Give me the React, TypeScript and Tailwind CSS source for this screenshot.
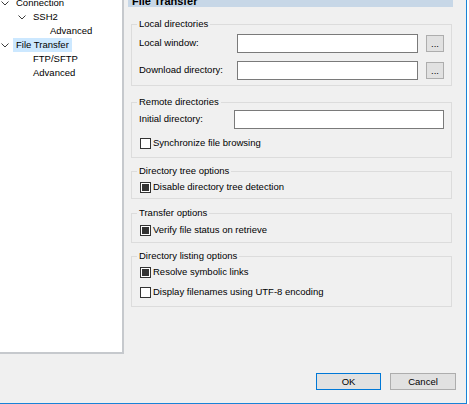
import React from 'react';

const font = { fontFamily: '"Liberation Sans", Arial, sans-serif' };

type TreeItem = { label: string; level: number; open?: boolean; selected?: boolean };

const tree: TreeItem[] = [
  { label: 'Connection', level: 0, open: true },
  { label: 'SSH2', level: 1, open: true },
  { label: 'Advanced', level: 2 },
  { label: 'File Transfer', level: 0, open: true, selected: true },
  { label: 'FTP/SFTP', level: 1 },
  { label: 'Advanced', level: 1 },
];

const Chevron = () => (
  <svg width="8" height="5" viewBox="0 0 8 5" className="ml-[1px]">
    <polyline points="0.5,0.5 4,4 7.5,0.5" fill="none" stroke="#3c3c3c" strokeWidth="1" />
  </svg>
);

const TreeRow: React.FC<{ item: TreeItem }> = ({ item }) => {
  const indent = ['pl-0', 'pl-[17px]', 'pl-[34px]'][item.level];
  return (
    <div className={`flex items-center h-[14px] ${indent}`}>
      <div className="w-[13px] flex items-center">{item.open && <Chevron />}</div>
      <span className={`px-[3px] h-[14px] leading-[14px] ${item.selected ? 'bg-[#cce8ff]' : ''}`}>
        {item.label}
      </span>
    </div>
  );
};

const Checkbox: React.FC<{ label: string; checked?: boolean; className?: string }> = ({ label, checked, className }) => (
  <div className={`flex items-center h-[12px] ${className ?? ''}`}>
    <div className="ml-[1px] w-[11px] h-[11px] border border-[#333333] bg-white flex items-center justify-center">
      {checked && <div className="w-[7px] h-[7px] bg-[#333333]" />}
    </div>
    <span className="ml-[2px] leading-[12px]">{label}</span>
  </div>
);

const Group: React.FC<{ title: string; className?: string; children: React.ReactNode }> = ({ title, className, children }) => (
  <fieldset className={`ml-[7px] w-[321px] border border-[#dcdcdc] px-[7px] ${className ?? ''}`}>
    <legend className="ml-[-2px] px-[2px] leading-[12px] h-[12px]">{title}</legend>
    {children}
  </fieldset>
);

const TextBox: React.FC<{ className: string }> = ({ className }) => (
  <input type="text" readOnly className={`h-[19px] bg-white border border-[#7a7a7a] outline-none ${className}`} />
);

const Browse = () => (
  <button className="ml-[8px] w-[18px] h-[17px] bg-[#e1e1e1] border border-[#adadad] flex items-end justify-center leading-[10px] pb-[2px]">
    ...
  </button>
);

export default function App() {
  return (
    <div className="w-[469px] h-[404px] bg-white text-black text-[9.5px]" style={font}>
      <div className="w-[467px] h-[404px] bg-[#f0f0f0] border-r border-b border-[#1883d7] flex flex-col overflow-hidden">
        <div className="flex h-[354px]">
          <div className="w-[124px] h-[354px] bg-white border-r-2 border-b-2 border-[#c6c9cd] overflow-hidden">
            <div className="mt-[-4px]">
              {tree.map((item, i) => (
                <TreeRow key={i} item={item} />
              ))}
            </div>
          </div>

          <div className="flex-1 flex flex-col overflow-hidden">
            <div className="ml-[4px] mt-[-14px] w-[325px] h-[21px] shrink-0 bg-[#c7d7e7] flex items-end px-[4px]">
              <span className="font-bold text-[11px] leading-[11px]">File Transfer</span>
            </div>

            <Group title="Local directories" className="mt-[11px] pt-[4px] pb-[5px]">
              <div className="flex items-center h-[19px]">
                <span className="w-[98px]">Local window:</span>
                <TextBox className="w-[181px]" />
                <Browse />
              </div>
              <div className="flex items-center h-[19px] mt-[8px]">
                <span className="w-[98px]">Download directory:</span>
                <TextBox className="w-[181px]" />
                <Browse />
              </div>
            </Group>

            <Group title="Remote directories" className="mt-[10px] pt-[2px] pb-[8px]">
              <div className="flex items-center h-[19px]">
                <span className="w-[95px]">Initial directory:</span>
                <TextBox className="w-[210px]" />
              </div>
              <Checkbox label="Synchronize file browsing" className="mt-[8px]" />
            </Group>

            <Group title="Directory tree options" className="mt-[7px] pt-[4px] pb-[5px]">
              <Checkbox label="Disable directory tree detection" checked />
            </Group>

            <Group title="Transfer options" className="mt-[8px] pt-[5px] pb-[6px]">
              <Checkbox label="Verify file status on retrieve" checked />
            </Group>

            <Group title="Directory listing options" className="mt-[7px] pt-[4px] pb-[8px]">
              <Checkbox label="Resolve symbolic links" checked />
              <Checkbox label="Display filenames using UTF-8 encoding" className="mt-[8px]" />
            </Group>
          </div>
        </div>

        <div className="flex justify-end gap-[9px] pr-[10px] mt-[19px]">
          <button className="w-[65px] h-[17px] bg-[#e1e1e1] border border-[#0078d7] leading-[15px]">OK</button>
          <button className="w-[66px] h-[17px] bg-[#e1e1e1] border border-[#adadad] leading-[15px]">Cancel</button>
        </div>
      </div>
    </div>
  );
}
